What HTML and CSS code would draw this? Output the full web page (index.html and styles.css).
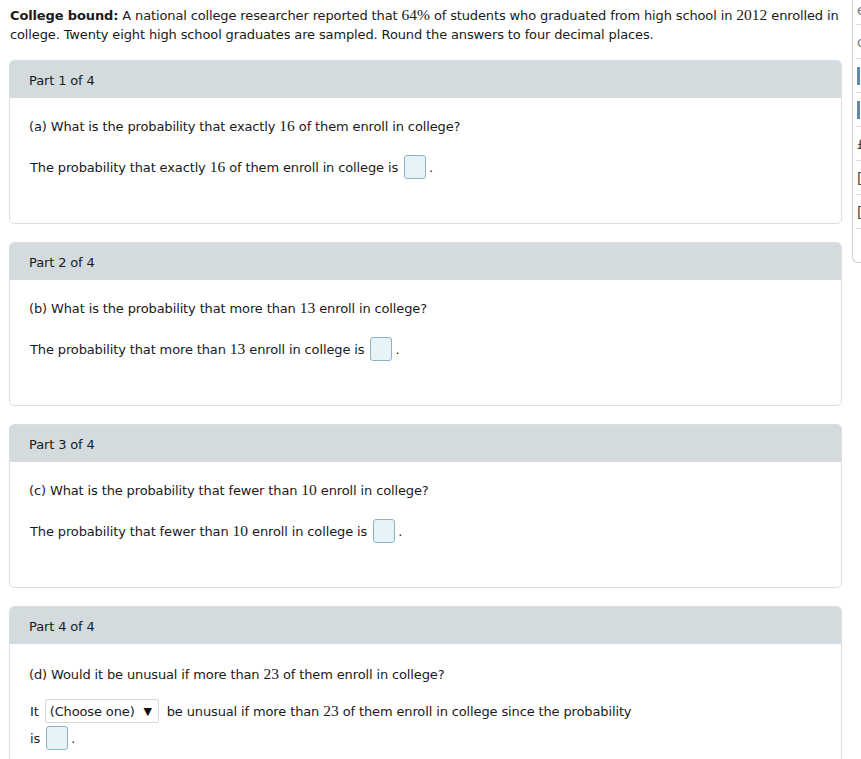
FILE: index.html
```html
<!DOCTYPE html>
<html>
<head>
<meta charset="utf-8">
<link rel="stylesheet" href="styles.css">
</head>
<body>
<div class="page">
  <main class="main">
    <div class="intro"><b>College bound:</b> A national college researcher reported that <span class="m">64%</span> of students who graduated from high school in <span class="m">2012</span> enrolled in college. Twenty eight high school graduates are sampled. Round the answers to four decimal places.</div>

    <section class="card">
      <div class="card-head">Part 1 of 4</div>
      <div class="card-body">
        <div class="q">(a) What is the probability that exactly <span class="m">16</span> of them enroll in college?</div>
        <div class="ans">The probability that exactly <span class="m">16</span> of them enroll in college is <span class="box"></span><span class="dot">.</span></div>
      </div>
    </section>

    <section class="card">
      <div class="card-head">Part 2 of 4</div>
      <div class="card-body">
        <div class="q">(b) What is the probability that more than <span class="m">13</span> enroll in college?</div>
        <div class="ans">The probability that more than <span class="m">13</span> enroll in college is <span class="box"></span><span class="dot">.</span></div>
      </div>
    </section>

    <section class="card">
      <div class="card-head">Part 3 of 4</div>
      <div class="card-body">
        <div class="q">(c) What is the probability that fewer than <span class="m">10</span> enroll in college?</div>
        <div class="ans">The probability that fewer than <span class="m">10</span> enroll in college is <span class="box"></span><span class="dot">.</span></div>
      </div>
    </section>

    <section class="card">
      <div class="card-head">Part 4 of 4</div>
      <div class="card-body">
        <div class="q q4">(d) Would it be unusual if more than <span class="m">23</span> of them enroll in college?</div>
        <div class="ans ans4">It <span class="select">(Choose one) <span class="arrow">&#9660;</span></span> be unusual if more than <span class="m">23</span> of them enroll in college since the probability</div>
        <div class="ans ans5">is <span class="box"></span><span class="dot">.</span></div>
      </div>
    </section>
  </main>

  <aside class="tools">
    <div class="tool t1"><span class="g gray">e</span></div>
    <div class="tool"><span class="g gray">c</span></div>
    <div class="tool"><span class="bar"></span></div>
    <div class="tool"><span class="bar"></span></div>
    <div class="tool"><span class="g dark">£</span></div>
    <div class="tool"><span class="g dark">[</span></div>
    <div class="tool"><span class="g dark">[</span></div>
    <div class="tool last"></div>
  </aside>
</div>
</body>
</html>
```

FILE: styles.css
```css
html, body {
  margin: 0;
  padding: 0;
  background: #ffffff;
  overflow: hidden;
}
body {
  font-family: "DejaVu Sans", Verdana, sans-serif;
  font-size: 13px;
  letter-spacing: -0.13px;
  color: #1a1a1a;
}
.page {
  display: flex;
  align-items: flex-start;
  width: 861px;
  height: 759px;
  overflow: hidden;
}
.main {
  width: 852px;
  flex-shrink: 0;
}
.intro {
  padding: 6px 6px 0 10px;
  line-height: 19px;
  height: 38px;
}
.intro b {
  font-weight: bold;
}
.m {
  font-family: "Liberation Serif", "Times New Roman", serif;
  font-size: 15.5px;
  line-height: 1;
  letter-spacing: 0;
}
.card {
  margin: 16px 0 0 9px;
  width: 831px;
  height: 162px;
  border: 1px solid #dcdfe0;
  border-radius: 5px;
  overflow: hidden;
}
.card + .card {
  margin-top: 18px;
}
.card-head {
  background: #d3dbde;
  height: 37px;
  line-height: 39px;
  padding-left: 19px;
}
.card-body {
  padding: 0 19px;
}
.q {
  margin-top: 19px;
  line-height: 20px;
}
.ans {
  margin-top: 17px;
  height: 26px;
  display: flex;
  align-items: center;
  white-space: pre;
  padding-left: 1px;
}
.box {
  display: inline-block;
  width: 20px;
  height: 22px;
  border: 1.5px solid #8db3c4;
  background: #e6f3f8;
  border-radius: 3px;
  margin-left: 2px;
}
.dot {
  margin-left: 3px;
}
.q4 {
  margin-top: 21px;
}
.ans4 {
  margin-top: 14px;
  height: 24px;
}
.ans5 {
  margin-top: 2px;
}
.select {
  display: inline-flex;
  align-items: center;
  height: 22px;
  width: 108px;
  padding-left: 4px;
  border: 1px solid #d9d9d9;
  border-radius: 2px;
  background: #fff;
  margin: 0 4px 0 2px;
  white-space: pre;
}
.arrow {
  font-size: 11px;
  margin-left: 5px;
  color: #111;
}
.tools {
  flex-shrink: 0;
  width: 40px;
  height: 262px;
  border-left: 1px solid #d0d0d0;
  border-bottom: 1px solid #d0d0d0;
  border-bottom-left-radius: 6px;
  display: flex;
  flex-direction: column;
}
.tool {
  height: 34px;
  margin-left: 3px;
  border-bottom: 1px solid #dcdcdc;
  display: flex;
  align-items: center;
  padding-left: 1px;
  box-sizing: border-box;
  flex-shrink: 0;
}
.tool.t1 {
  height: 25px;
  align-items: flex-start;
  padding-top: 2px;
}
.tool.last {
  border-bottom: none;
  flex: 1;
}
.g {
  font-size: 14px;
  line-height: 16px;
}
.gray { color: #777; }
.dark { color: #444; }
.bar {
  display: inline-block;
  width: 3px;
  height: 18px;
  background: #5f88a8;
}
```
